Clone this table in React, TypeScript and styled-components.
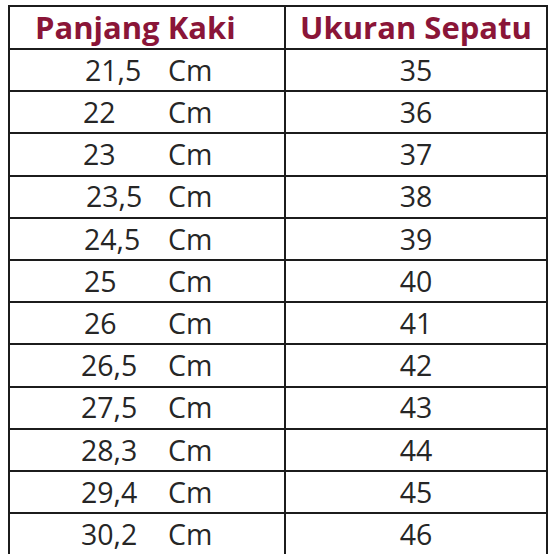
import React from 'react';
import styled, { createGlobalStyle } from 'styled-components';

const GlobalStyle = createGlobalStyle`
  html, body {
    margin: 0;
    padding: 0;
    background: #ffffff;
  }
  body {
    font-family: "Open Sans", "Noto Sans", sans-serif;
  }
`;

const Page = styled.div`
  width: 554px;
  height: 554px;
  overflow: hidden;
  padding: 5px 0 0 8px;
  box-sizing: border-box;
`;

const Table = styled.table`
  border-collapse: collapse;
  width: 538px;
  table-layout: fixed;
`;

const HeadCell = styled.th<{ $indent?: number }>`
  height: 41px;
  padding: 0 0 0 ${p => p.$indent ?? 0}px;
  border: 2px solid #1c1c1c;
  font-size: 31px;
  font-weight: 700;
  color: #8a1538;
  text-align: ${p => (p.$indent ? 'left' : 'center')};
  vertical-align: middle;
  line-height: 1;
`;

const Cell = styled.td`
  height: 40.2px;
  padding: 0;
  border: 2px solid #1c1c1c;
  font-size: 28.5px;
  color: #262626;
  text-align: center;
  vertical-align: middle;
  line-height: 1;
`;

const LengthCell = styled(Cell)`
  text-align: left;
`;

const Length = styled.span<{ $shift: number }>`
  display: inline-block;
  width: ${p => 83 - p.$shift}px;
  padding-left: ${p => 75 + p.$shift}px;
`;

const rows = [
  { len: '21,5', shift: 0, size: 35 },
  { len: '22', shift: -2, size: 36 },
  { len: '23', shift: -2, size: 37 },
  { len: '23,5', shift: 1, size: 38 },
  { len: '24,5', shift: -1, size: 39 },
  { len: '25', shift: -1, size: 40 },
  { len: '26', shift: -1, size: 41 },
  { len: '26,5', shift: -4, size: 42 },
  { len: '27,5', shift: -4, size: 43 },
  { len: '28,3', shift: -4, size: 44 },
  { len: '29,4', shift: -4, size: 45 },
  { len: '30,2', shift: -4, size: 46 },
];

const App: React.FC = () => {
  return (
    <>
      <GlobalStyle />
      <Page>
        <Table>
          <colgroup>
            <col style={{ width: 276 }} />
            <col style={{ width: 262 }} />
          </colgroup>
          <thead>
            <tr>
              <HeadCell $indent={25}>Panjang Kaki</HeadCell>
              <HeadCell>Ukuran Sepatu</HeadCell>
            </tr>
          </thead>
          <tbody>
            {rows.map(r => (
              <tr key={r.size}>
                <LengthCell>
                  <Length $shift={r.shift}>{r.len}</Length>Cm
                </LengthCell>
                <Cell>{r.size}</Cell>
              </tr>
            ))}
          </tbody>
        </Table>
      </Page>
    </>
  );
};

export default App;
